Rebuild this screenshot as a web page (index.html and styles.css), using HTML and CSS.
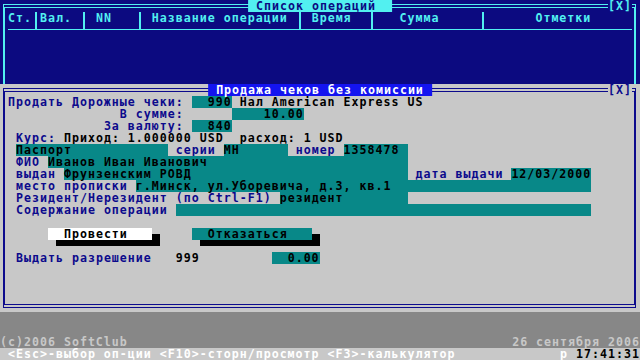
FILE: index.html
```html
<!DOCTYPE html>
<html lang="ru">
<head>
<meta charset="utf-8">
<title>Список операций</title>
<link rel="stylesheet" href="styles.css">
</head>
<body>
<div class="screen">
  <section class="win list">
    <div class="ttl"> Список операций  </div>
    <div class="x">[X]</div>
    <div class="frame">
      <div class="row">Ст.<i class="vs"></i>Вал. <i class="vs"></i> NN   <i class="vs"></i> Название операции <i class="vs"></i> Время  <i class="vs"></i>   Сумма     <i class="vs"></i>      Отметки</div>
      <div class="row"><div class="hr"></div></div>
    </div>
  </section>
  <section class="win form">
    <div class="ttl"> Продажа чеков без комиссии </div>
    <div class="x">[X]</div>
    <div class="frame">
      <div class="row"><span class="l">Продать Дорожные чеки:</span> <span class="f">  990</span> Нал American Express US</div>
      <div class="row">              <span class="l">В сумме:</span>      <span class="f">    10.00</span></div>
      <div class="row">            <span class="l">За валюту:</span> <span class="f">  840</span></div>
      <div class="row"> <span class="l">Курс:</span> Приход: 1.000000 USD  расход: 1 USD</div>
      <div class="row"> <span class="f">Паспорт            </span><span class="l"> серии </span><span class="f">МН      </span><span class="l"> номер </span><span class="f">1358478 </span></div>
      <div class="row"> <span class="l">ФИО</span> <span class="f">Иванов Иван Иванович                         </span></div>
      <div class="row"> <span class="l">выдан</span> <span class="f">Фрунзенским РОВД                           </span><span class="l"> дата выдачи </span><span class="f">12/03/2000</span></div>
      <div class="row"> <span class="l">место прописки</span> <span class="f">г.Минск, ул.Уборевича, д.3, кв.1                         </span></div>
      <div class="row"> <span class="l">Резидент/Нерезидент (по Ctrl-F1)</span> <span class="f">резидент        </span></div>
      <div class="row"> <span class="l">Содержание операции</span> <span class="f">                                                    </span></div>
      <div class="row"></div>
      <div class="row">     <span class="btn">  Провести   </span><span class="shr"> </span>    <span class="btn2">  Отказаться   </span><span class="shr"> </span></div>
      <div class="row">      <span class="shb">             </span>     <span class="shb">               </span></div>
      <div class="row"> <span class="l">Выдать разрешение</span>   999         <span class="f">  0.00</span></div>
    </div>
  </section>
  <div class="desk">
    <span>(c)2006 SoftClub</span><span>26 сентября 2006</span>
  </div>
  <div class="status">
    <span> &lt;Esc&gt;-выбор оп-ции &lt;F10&gt;-сторн/просмотр &lt;F3&gt;-калькулятор</span><span>р <b class="clock">17:41:31</b></span>
  </div>
</div>
</body>
</html>
```
FILE: styles.css
```css
* { box-sizing: border-box; margin: 0; padding: 0; }
html, body { width: 640px; height: 360px; overflow: hidden; background: #878787; }
body {
  font-family: "DejaVu Sans Mono", monospace;
  font-weight: bold;
  font-size: 11.627px;
  letter-spacing: 1px;
  line-height: 12px;
}
.screen { width: 640px; height: 360px; display: flex; flex-direction: column; }
.win { position: relative; display: flex; flex-direction: column; flex: none; }

.list { height: 84px; background: #0c0a80; color: #52f0f0; }
.list .frame {
  flex: 1;
  margin: 4px 4px 0 3px;
  border: 2px solid #52f0f0;
  border-top: 4px double #52f0f0;
  border-bottom: 0;
  padding: 4px 2px 0 3px;
}
.list .ttl { background: #52f0f0; color: #0c0a80; }
.list .x { background: #0c0a80; color: #52f0f0; }

.form { height: 228px; background: #c8c8c8; color: #000; }
.form .frame {
  flex: 1;
  margin: 4px 4px 4px 3px;
  border: 2px solid #0c0a8c;
  border-top: 4px double #0c0a8c;
  border-bottom: 4px double #0c0a8c;
  padding: 4px 2px 0 3px;
}
.form .ttl { background: #1414f0; color: #fff; }
.form .x { background: #c8c8c8; color: #0c0a8c; }

.ttl, .x { position: absolute; top: 0; height: 12px; white-space: pre; }
.ttl { left: 50%; transform: translateX(-50%); }
.x { right: 8px; }

.row { height: 12px; white-space: pre; }
.row > span { display: inline-block; height: 12px; vertical-align: top; }
.vs {
  display: inline-block;
  width: 8px;
  height: 17px;
  vertical-align: top;
  background: linear-gradient(#52f0f0, #52f0f0) no-repeat 3px 0 / 2px 100%;
}
.hr { height: 1px; margin-top: 5px; background: #52f0f0; }

.l { color: #0c0a8c; }
.f { background: #088888; color: #000; }
.btn { background: #fff; color: #000; }
.btn2 { background: #088888; color: #000; }
.shr { background: linear-gradient(transparent 6px, #000 6px); }
.shb { background: linear-gradient(#000 6px, transparent 6px); }

.desk {
  height: 36px;
  flex: none;
  display: flex;
  justify-content: space-between;
  align-items: flex-end;
  white-space: pre;
  color: #c8c8c8;
  background: #878787;
}
.status {
  height: 12px;
  flex: none;
  display: flex;
  justify-content: space-between;
  white-space: pre;
  background: #c8c8c8;
  color: #fff;
}
.clock { color: #000; font-weight: bold; }
```
